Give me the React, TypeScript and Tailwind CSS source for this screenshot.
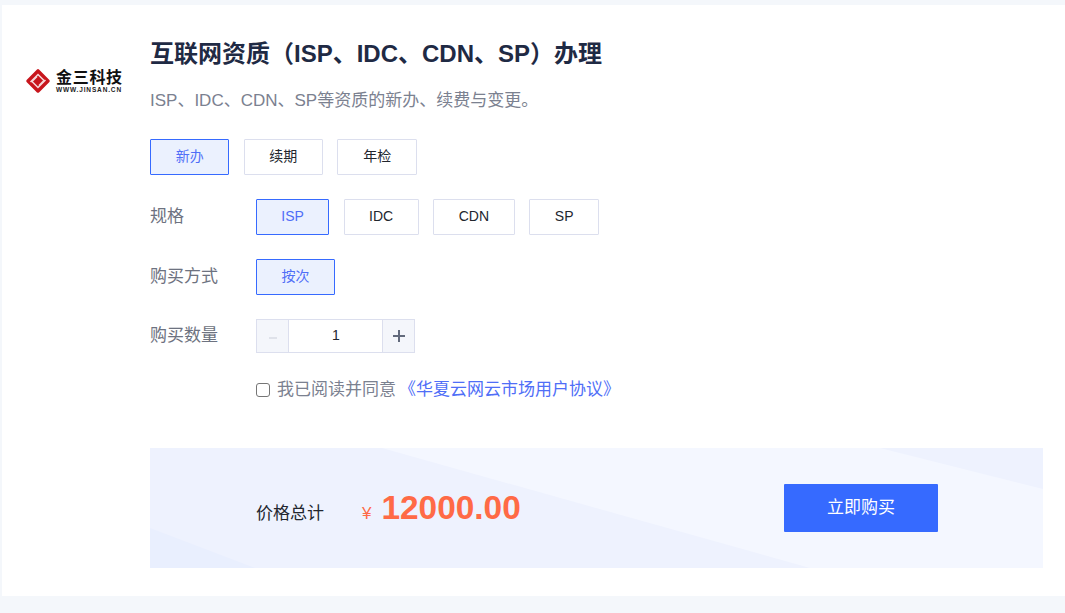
const optionBase = 'h-9 pb-[2px] flex items-center justify-center border text-[14px] rounded-[1px]';

function Option({ label, width, active }: { label: string; width: string; active?: boolean }) {
  return (
    <button
      className={`${optionBase} ${width} ${
        active ? 'border-[#366aff] bg-[#ebf1fe] text-[#4f6ef7]' : 'border-[#dcdfee] bg-white text-[#22262e]'
      }`}
    >
      {label}
    </button>
  );
}

function Logo() {
  return (
    <div className="flex items-center gap-[5px]">
      <svg width="26" height="26" viewBox="0 0 26 26">
        <path d="M13 1 Q13.6 1 14 1.6 L24.4 12 Q25.2 13 24.4 14 L14 24.4 Q13 25.2 12 24.4 L1.6 14 Q0.8 13 1.6 12 L12 1.6 Q12.4 1 13 1 Z" fill="#c8161d" />
        <path d="M5.5 14 L13 6.5 L19 12.5 L14 17.5 M20.5 12 L13 19.5 L7 13.5 L12 8.5" fill="none" stroke="#f6d9da" strokeWidth="1.5" />
      </svg>
      <div className="flex flex-col items-start">
        <span className="text-[16px] leading-[17px] font-bold text-[#111] tracking-[0.7px]">金三科技</span>
        <span className="text-[6.5px] leading-[7px] font-bold text-[#222] tracking-[0.85px] whitespace-nowrap">WWW.JINSAN.CN</span>
      </div>
    </div>
  );
}

export default function App() {
  return (
    <div
      className="h-[613px] overflow-hidden bg-[#f4f7fb] pt-[5px] pl-[2px] text-[14px]"
      style={{ fontFamily: '"Liberation Sans", "Noto Sans CJK SC", sans-serif' }}
    >
      <div className="h-[591px] bg-white flex">
        {/* Logo column */}
        <div className="w-[148px] shrink-0 pl-[23px] pt-[63px]">
          <Logo />
        </div>

        <div className="flex-1 pr-[22px]">
          {/* Header */}
          <h1 className="mt-[34px] text-[24px] leading-[30px] font-bold text-[#1f2a44]">
            互联网资质（ISP、IDC、CDN、SP）办理
          </h1>
          <p className="mt-[20px] text-[17px] leading-[24px] text-[#7b8190]">
            ISP、IDC、CDN、SP等资质的新办、续费与变更。
          </p>

          {/* Type */}
          <div className="mt-[26px] flex gap-[14.3px]">
            <Option label="新办" width="w-[79.3px]" active />
            <Option label="续期" width="w-[79.3px]" />
            <Option label="年检" width="w-[80px]" />
          </div>

          {/* Spec */}
          <div className="mt-6 flex">
            <div className="w-[106px] text-[17px] leading-[36px] text-[#6d7280]">规格</div>
            <div className="flex gap-[14.3px]">
              <Option label="ISP" width="w-[73.3px]" active />
              <Option label="IDC" width="w-[75px]" />
              <Option label="CDN" width="w-[82px]" />
              <Option label="SP" width="w-[70px]" />
            </div>
          </div>

          {/* Purchase type */}
          <div className="mt-6 flex">
            <div className="w-[106px] text-[17px] leading-[36px] text-[#6d7280]">购买方式</div>
            <Option label="按次" width="w-[79px]" active />
          </div>

          {/* Quantity */}
          <div className="mt-6 flex">
            <div className="w-[106px] text-[17px] leading-[34px] text-[#6d7280]">购买数量</div>
            <div className="flex h-[34px] w-[159px] border border-[#dcdfee]">
              <div className="w-[31px] pt-[3px] flex items-center justify-center bg-[#f4f6fb]">
                <span className="w-[8px] h-[2px] bg-[#dfe2ea]" />
              </div>
              <div className="flex-1 pb-[1px] pl-[1px] flex items-center justify-center border-x border-[#dcdfee] text-[#22262e]">1</div>
              <div className="w-[31px] flex items-center justify-center bg-[#f4f6fb]">
                <svg width="14" height="14" viewBox="0 0 14 14">
                  <path d="M1 7 H13 M7 1 V13" stroke="#626a7c" strokeWidth="2" />
                </svg>
              </div>
            </div>
          </div>

          {/* Agreement */}
          <div className="mt-[25px] ml-[106px] flex items-center h-6 text-[17px]">
            <span className="w-[14px] h-[14px] rounded-[3px] border border-[#767676] bg-white" />
            <span className="ml-[7px] text-[#7b8190]">我已阅读并同意</span>
            <span className="ml-[3px] text-[#4f6ef7]">《华夏云网云市场用户协议》</span>
          </div>

          {/* Price bar */}
          <div className="relative mt-[46px] h-[120px] bg-[#f4f7ff] overflow-hidden">
            <svg className="absolute inset-0" width="893" height="120" viewBox="0 0 893 120">
              <path d="M0 0 H232 L660 120 H0 Z" fill="#eef2fe" />
              <path d="M730 0 H893 V41 Z" fill="#eef2fe" />
              <path d="M0 80 L105 120 H0 Z" fill="#e9effe" />
            </svg>
            <div className="relative h-full flex items-center pl-[106px] pr-[105px]">
              <span className="mt-[11px] text-[17px] text-[#22262e]">价格总计</span>
              <span className="ml-[38px] mt-[11px] text-[17px] text-[#ff6a46]">¥</span>
              <span className="ml-[10px] text-[33.4px] leading-[40px] font-bold text-[#ff6a46]">12000.00</span>
              <button className="ml-auto w-[154px] h-12 bg-[#366aff] rounded-[1px] text-white text-[17px]">立即购买</button>
            </div>
          </div>
        </div>
      </div>
    </div>
  );
}
